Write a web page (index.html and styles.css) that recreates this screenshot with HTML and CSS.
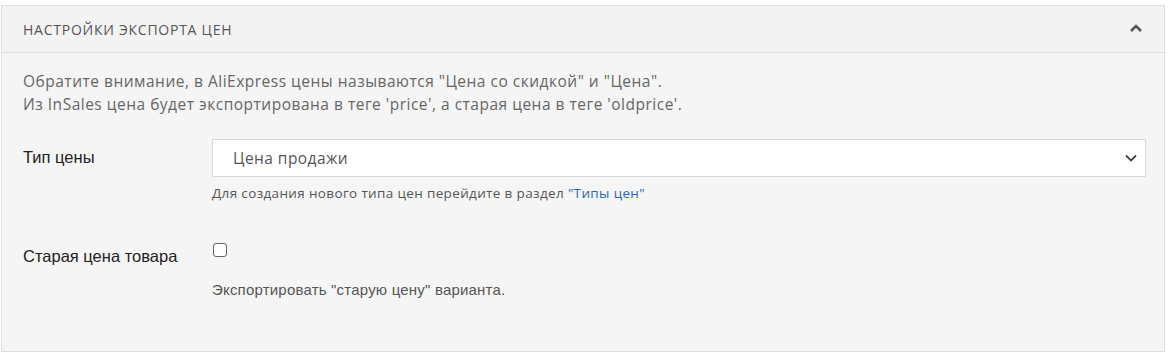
FILE: index.html
```html
<!DOCTYPE html>
<html lang="ru">
<head>
<meta charset="utf-8">
<link rel="stylesheet" href="styles.css">
</head>
<body>
<div class="panel">
  <div class="panel-header">
    <span class="panel-title">НАСТРОЙКИ ЭКСПОРТА ЦЕН</span>
    <svg class="chev-up" width="12" height="8" viewBox="0 0 12 8"><path d="M1 7 L6 2 L11 7" fill="none" stroke="#555" stroke-width="2.6"/></svg>
  </div>
  <div class="panel-body">
    <p class="note">Обратите внимание, в AliExpress цены называются "Цена со скидкой" и "Цена".<br>Из InSales цена будет экспортирована в теге 'price', а старая цена в теге 'oldprice'.</p>
    <div class="row row-price">
      <div class="label">Тип цены</div>
      <div class="control">
        <div class="select">
          <span>Цена продажи</span>
          <svg width="12" height="8" viewBox="0 0 12 8"><path d="M1 1.5 L6 6.5 L11 1.5" fill="none" stroke="#444" stroke-width="1.8"/></svg>
        </div>
        <div class="help">Для создания нового типа цен перейдите в раздел <a href="#">"Типы цен"</a></div>
      </div>
    </div>
    <div class="row row-old">
      <div class="label">Старая цена товара</div>
      <div class="control">
        <span class="checkbox"></span>
        <div class="help help-arial">Экспортировать "старую цену" варианта.</div>
      </div>
    </div>
  </div>
</div>
</body>
</html>
```
FILE: styles.css
```css
* { box-sizing: border-box; }
body {
  margin: 0;
  background: #fff;
  font-family: "Open Sans", "Noto Sans", sans-serif;
}
.panel {
  margin: 5px 4px 0 1px;
  height: 347px;
  border: 1px solid #dedede;
  background: #f5f5f5;
}
.panel-header {
  height: 47px;
  display: flex;
  align-items: center;
  justify-content: space-between;
  padding: 0 22px 0 21px;
  background: #f3f3f3;
  border-bottom: 1px solid #dedede;
}
.panel-title {
  font-size: 14px;
  letter-spacing: 0.75px;
  color: #555;
}
.chev-up { display: block; margin-top: -2px; }
.panel-body {
  padding: 17px 18px 0 21px;
}
.note {
  margin: 0;
  font-size: 15.5px;
  letter-spacing: 0.5px;
  line-height: 23px;
  color: #666;
}
.row {
  display: grid;
  grid-template-columns: 189px 1fr;
}
.row-price { margin-top: 23px; }
.row-old { margin-top: 38px; }
.label {
  font-family: "Liberation Sans", Arial, sans-serif;
  font-size: 16.5px;
  color: #222;
}
.row-price .label { padding-top: 9px; }
.row-old .label { padding-top: 7px; }
.select {
  height: 38px;
  background: #fff;
  border: 1px solid #d9d9d9;
  display: flex;
  align-items: center;
  justify-content: space-between;
  padding: 0 8px 0 20px;
  font-size: 15.5px;
  letter-spacing: 0.45px;
  color: #555;
}
.select svg { display: block; }
.help {
  margin-top: 7px;
  font-size: 13.5px;
  letter-spacing: 0.35px;
  color: #555;
}
.help a { color: #2a6ab0; text-decoration: none; }
.help-arial {
  font-family: "Liberation Sans", Arial, sans-serif;
  font-size: 15px;
  letter-spacing: 0.2px;
  margin-top: 24px;
}
.checkbox {
  display: block;
  width: 14px;
  height: 14px;
  margin-left: 1px;
  margin-top: 3px;
  border: 1.5px solid #666;
  border-radius: 3px;
  background: #fff;
}
```
